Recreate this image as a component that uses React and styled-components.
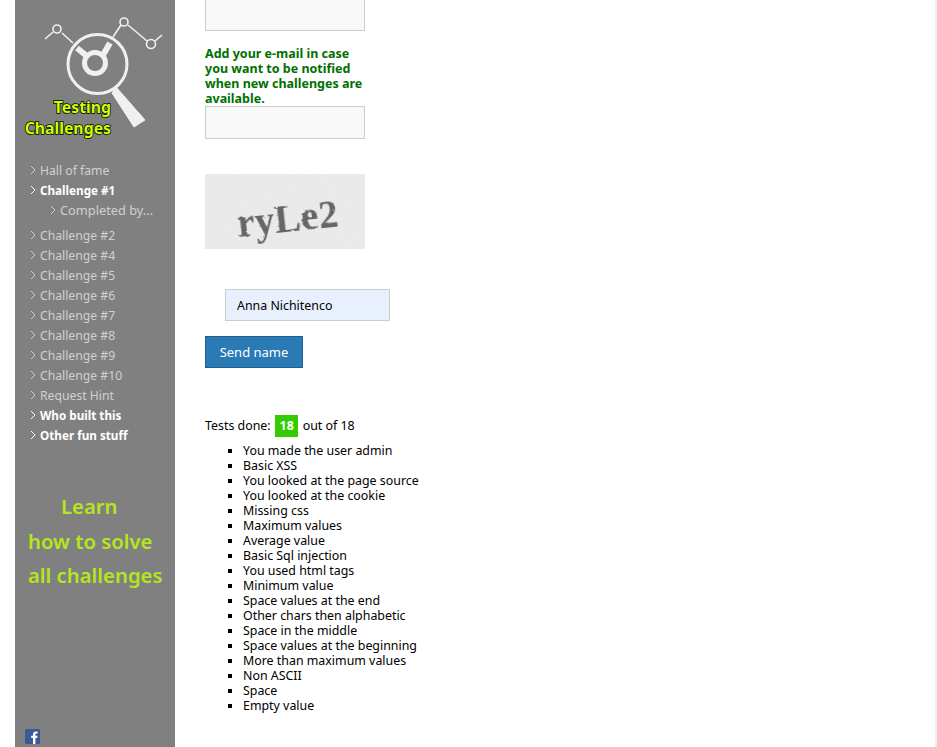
import { createGlobalStyle, styled } from "styled-components";

const navTop = [
  { label: "Hall of fame" },
  { label: "Challenge #1", active: true },
  { label: "Completed by...", sub: true },
];

const navRest = [
  { label: "Challenge #2" },
  { label: "Challenge #4" },
  { label: "Challenge #5" },
  { label: "Challenge #6" },
  { label: "Challenge #7" },
  { label: "Challenge #8" },
  { label: "Challenge #9" },
  { label: "Challenge #10" },
  { label: "Request Hint" },
  { label: "Who built this", active: true },
  { label: "Other fun stuff", active: true },
];

const tests = [
  "You made the user admin",
  "Basic XSS",
  "You looked at the page source",
  "You looked at the cookie",
  "Missing css",
  "Maximum values",
  "Average value",
  "Basic Sql injection",
  "You used html tags",
  "Minimum value",
  "Space values at the end",
  "Other chars then alphabetic",
  "Space in the middle",
  "Space values at the beginning",
  "More than maximum values",
  "Non ASCII",
  "Space",
  "Empty value",
];

function Logo() {
  return (
    <svg width="160" height="150" viewBox="0 0 160 150">
      <g fill="none" stroke="#f0f0f0" strokeWidth="1.6">
        <path d="M30 39 L38 32 M47 33 L58 43" />
        <circle cx="42" cy="29" r="4" />
        <path d="M98 37 L106 25 M113 25 L132 41 M140 41 L147 35" />
        <circle cx="109" cy="22" r="4" />
        <circle cx="136" cy="44" r="4.5" />
      </g>
      <circle cx="82.5" cy="64" r="29.5" fill="none" stroke="#f0f0f0" strokeWidth="3" />
      <circle cx="80" cy="63" r="10.5" fill="none" stroke="#f0f0f0" strokeWidth="5" />
      <path d="M62 48 L73 57 M95 43 L88 55" stroke="#f0f0f0" strokeWidth="6" fill="none" />
      <path d="M97 93 L119 127 L130 120 L101 87 Z" fill="#f0f0f0" stroke="#f0f0f0" strokeWidth="1" strokeLinejoin="round" />
      <LogoText x="96" y="113" textAnchor="end">Testing</LogoText>
      <LogoText x="96" y="134" textAnchor="end">Challenges</LogoText>
    </svg>
  );
}

function Captcha() {
  return (
    <svg width="160" height="75" viewBox="0 0 160 75">
      <defs>
        <filter id="grain" x="0" y="0" width="100%" height="100%">
          <feTurbulence type="fractalNoise" baseFrequency="1.1" numOctaves="1" seed="4" />
          <feColorMatrix values="0 0 0 0 0.8  0 0 0 0 0.8  0 0 0 0 0.8  2.6 0 0 0 -0.8" />
        </filter>
        <filter id="rough" x="-10%" y="-10%" width="120%" height="120%">
          <feTurbulence type="fractalNoise" baseFrequency="0.25" numOctaves="2" seed="9" />
          <feDisplacementMap in="SourceGraphic" scale="2.5" />
        </filter>
      </defs>
      <rect width="160" height="75" fill="#ececec" />
      <rect width="160" height="75" filter="url(#grain)" />
      <CaptchaText x="32" y="58" transform="rotate(-6 80 45)" filter="url(#rough)">
        ryLe2
      </CaptchaText>
    </svg>
  );
}

function NavRow({ label, active, sub }) {
  return (
    <NavItem $active={active} $sub={sub}>
      <svg width="6" height="10" viewBox="0 0 6 10">
        <path d="M1 1 L5 5 L1 9" fill="none" stroke="currentColor" strokeWidth="1" />
      </svg>
      {label}
    </NavItem>
  );
}

export default function App() {
  return (
    <>
      <GlobalStyle />
      <Page>
        <Sidebar>
          <Logo />
          <NavList>
            {navTop.map((item) => (
              <NavRow key={item.label} {...item} />
            ))}
          </NavList>
          <NavList $gap>
            {navRest.map((item) => (
              <NavRow key={item.label} {...item} />
            ))}
          </NavList>
          <Learn>
            <LearnLine $indent={33}>Learn</LearnLine>
            <LearnLine>how to solve</LearnLine>
            <LearnLine>all challenges</LearnLine>
          </Learn>
          <FacebookLink>
            <svg width="15" height="15" viewBox="0 0 15 15">
              <rect width="15" height="15" rx="1.5" fill="#3b5998" />
              <path d="M10.4 15 V9 H12.2 L12.5 6.8 H10.4 V5.5 C10.4 4.8 10.7 4.4 11.5 4.4 H12.6 V2.5 H10.9 C9 2.5 8 3.6 8 5.3 V6.8 H6.2 V9 H8 V15 Z" fill="#fff" />
            </svg>
          </FacebookLink>
        </Sidebar>

        <Main>
          <TopField readOnly />
          <Notice>
            Add your e-mail in case you want to be notified when new challenges
            are available.
          </Notice>
          <EmailField readOnly />
          <CaptchaBox>
            <Captcha />
          </CaptchaBox>
          <NameField readOnly value="Anna Nichitenco" />
          <SendButton type="button">Send name</SendButton>
          <Score>
            Tests done:
            <Badge>18</Badge>
            out of 18
          </Score>
          <TestList>
            {tests.map((test) => (
              <li key={test}>{test}</li>
            ))}
          </TestList>
        </Main>
      </Page>
    </>
  );
}

const GlobalStyle = createGlobalStyle`
  html, body {
    margin: 0;
    padding: 0;
    background: #fff;
  }

  body {
    font-family: "Noto Sans", sans-serif;
    font-size: 12.4px;
    color: #000;
  }
`;

const Page = styled.div`
  display: flex;
  box-sizing: border-box;
  width: 937px;
  height: 747px;
  overflow: hidden;
  padding-left: 15px;
  border-right: 2px solid #eeeeee;
`;

const Sidebar = styled.aside`
  display: flex;
  flex-direction: column;
  width: 160px;
  flex-shrink: 0;
  background: #808080;
`;

const LogoText = styled.text`
  font-family: "Noto Sans", sans-serif;
  font-size: 15.8px;
  font-weight: 700;
  fill: #ccff00;
  stroke: #000;
  stroke-width: 1.5px;
  paint-order: stroke;
`;

const NavList = styled.nav`
  display: flex;
  flex-direction: column;
  margin-top: ${(props) => (props.$gap ? "5px" : "10px")};
`;

const NavItem = styled.a`
  display: flex;
  align-items: center;
  gap: 4px;
  height: 20px;
  padding-left: ${(props) => (props.$sub ? "35px" : "15px")};
  font-size: ${(props) => (props.$active ? "11.7px" : props.$sub ? "12.8px" : "12.2px")};
  font-weight: ${(props) => (props.$active ? 700 : 400)};
  color: ${(props) => (props.$active ? "#ffffff" : "#d0d0d0")};
`;

const Learn = styled.div`
  display: flex;
  flex-direction: column;
  margin-top: 44px;
  padding-left: 13px;
`;

const LearnLine = styled.span`
  height: 34.5px;
  line-height: 34px;
  padding-left: ${(props) => props.$indent || 0}px;
  font-size: 20.3px;
  font-weight: 600;
  color: #b5e61d;
  white-space: nowrap;
`;

const FacebookLink = styled.a`
  display: flex;
  margin-top: auto;
  padding: 0 0 3px 10px;
`;

const Main = styled.main`
  display: flex;
  flex-direction: column;
  align-items: flex-start;
  padding-left: 30px;
`;

const Field = styled.input`
  box-sizing: border-box;
  display: block;
  width: 160px;
  padding: 0 11px;
  background: #f9f9f9;
  border: 1px solid #cccccc;
  outline: none;
  font-family: inherit;
  font-size: 12.4px;
  color: #000;
`;

const TopField = styled(Field)`
  height: 31px;
  border-top: none;
`;

const EmailField = styled(Field)`
  height: 33px;
`;

const Notice = styled.p`
  width: 160px;
  margin: 15px 0 0;
  font-size: 12.5px;
  line-height: 15px;
  font-weight: 700;
  color: #007000;
`;

const CaptchaBox = styled.div`
  display: flex;
  margin-top: 35px;
`;

const CaptchaText = styled.text`
  font-family: "Liberation Serif", serif;
  font-size: 39px;
  font-weight: 700;
  letter-spacing: 0.4px;
  fill: #666666;
`;

const NameField = styled(Field)`
  width: 165px;
  height: 32px;
  margin: 40px 0 0 20px;
  background: #e8f0fe;
`;

const SendButton = styled.button`
  box-sizing: border-box;
  width: 98px;
  height: 32px;
  margin-top: 15px;
  padding: 0;
  background: #2a7ab5;
  border: 1px solid #1f5f8f;
  font-family: inherit;
  font-size: 13px;
  color: #fff;
`;

const Score = styled.div`
  display: flex;
  align-items: center;
  gap: 4.5px;
  height: 23px;
  margin-top: 46px;
`;

const Badge = styled.span`
  display: flex;
  align-items: center;
  justify-content: center;
  width: 23px;
  height: 22px;
  background: #33cc00;
  font-weight: 700;
  color: #fff;
`;

const TestList = styled.ul`
  margin: 6px 0 0;
  padding-left: 38px;
  list-style: square;
  line-height: 15px;
`;
